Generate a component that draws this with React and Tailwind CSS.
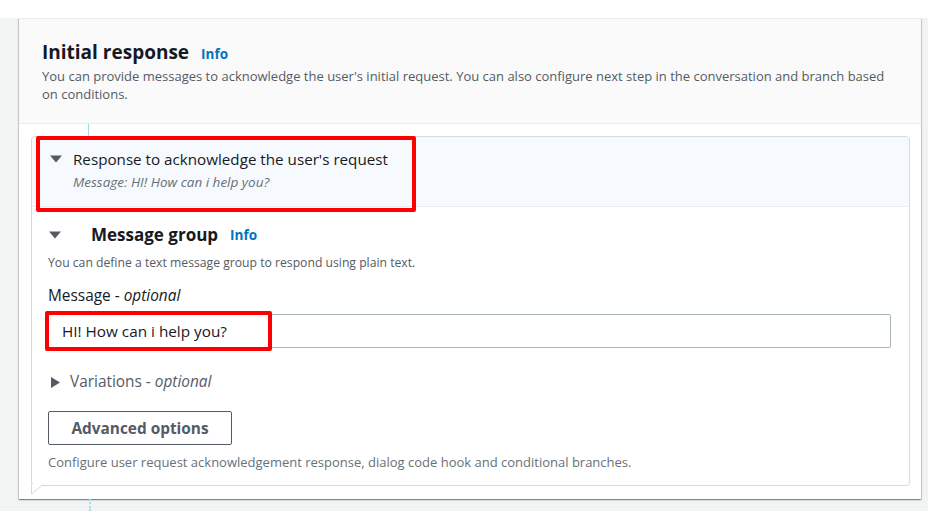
import React from "react";

function CaretDown({ className }) {
  return (
    <svg className={className} width="12" height="8" viewBox="0 0 12 8">
      <path d="M0 0.5 H12 L6 7.5 Z" fill="#545b64" />
    </svg>
  );
}

function CaretRight({ className }) {
  return (
    <svg className={className} width="9" height="11" viewBox="0 0 9 11">
      <path d="M0 0 V11 L9 5.5 Z" fill="#545b64" />
    </svg>
  );
}

export default function App() {
  return (
    <div
      className="w-[928px] h-[511px] bg-[#f2f3f3] overflow-hidden relative"
      style={{ fontFamily: '"Open Sans", "Noto Sans", sans-serif' }}
    >
      <div className="h-[18px] bg-white" />
      <div className="ml-[19px] w-[902px] bg-white border-t border-[#eaeded] shadow-[0_1px_1px_0_rgba(0,28,36,0.3),1px_1px_1px_0_rgba(0,28,36,0.15),-1px_1px_1px_0_rgba(0,28,36,0.15)] relative">
        {/* header */}
        <div className="bg-[#fafafa] border-b border-[#eaeded] pl-[23px] pr-[28px] pt-[22px] pb-[20px]">
          <div className="flex items-baseline gap-[12px]">
            <h2 className="text-[19px] leading-[22px] font-bold text-[#16191f]">Initial response</h2>
            <span className="text-[13.5px] font-bold text-[#0073bb]">Info</span>
          </div>
          <p className="mt-[3px] text-[13px] leading-[18px] text-[#545b64]">
            You can provide messages to acknowledge the user's initial request. You can also configure next step in the conversation and branch based on conditions.
          </p>
        </div>
        {/* content */}
        <div className="relative pl-[12px] pr-[11px] pt-[12px] pb-[13px]">
          <div className="absolute left-[69px] top-0 h-[12px] w-px bg-[#a6d9e2]" />
          <div className="relative border border-[#d5dbdb] rounded-[4px]">
            <div className="bg-[#f6fafe] border-b border-[#eaeded] rounded-t-[4px] pt-[12px] pb-[15px] pl-[18px]">
              <div className="flex items-center h-[20px]">
                <CaretDown className="mr-[11px]" />
                <span className="text-[15.2px] leading-[20px] text-[#16191f]">Response to acknowledge the user's request</span>
              </div>
              <div className="mt-[4px] pl-[23px] text-[13.5px] leading-[18px] italic text-[#687078]">
                Message: HI! How can i help you?
              </div>
            </div>
            <div className="pl-[16px] pr-[18px] pt-[17px] pb-[15px]">
              <div className="flex items-center h-[22px]">
                <CaretDown className="ml-[1px]" />
                <span className="ml-[30px] text-[17px] leading-[22px] font-bold text-[#16191f]">Message group</span>
                <span className="ml-[12px] text-[13.5px] font-bold text-[#0073bb]">Info</span>
              </div>
              <p className="mt-[8px] text-[12.2px] leading-[18px] text-[#545b64]">
                You can define a text message group to respond using plain text.
              </p>
              <div className="mt-[14px] text-[15.4px] leading-[20px] text-[#16191f]">
                Message - <i>optional</i>
              </div>
              <div className="mt-[8px] h-[34px] border border-[#aab7b8] rounded-[2px] flex items-center pl-[13px] text-[15.3px] text-[#16191f]">
                HI! How can i help you?
              </div>
              <div className="mt-[24px] flex items-center h-[20px]">
                <CaretRight className="ml-[3px]" />
                <span className="ml-[10px] text-[15.4px] leading-[20px] text-[#545b64]">
                  Variations - <i>optional</i>
                </span>
              </div>
              <button className="mt-[19px] h-[34px] w-[184px] border border-[#545b64] rounded-[2px] text-[15.4px] font-bold text-[#545b64] bg-white">
                Advanced options
              </button>
              <p className="mt-[9px] text-[13px] leading-[16px] text-[#687078]">
                Configure user request acknowledgement response, dialog code hook and conditional branches.
              </p>
            </div>
            {/* speech tail */}
            <svg className="absolute left-[-1px] bottom-[-10px]" width="14" height="11" viewBox="0 0 14 11">
              <path d="M0.5 0 V10 L12 0.5" fill="white" stroke="#d5dbdb" strokeWidth="1" />
              <rect x="1" y="0" width="10" height="1" fill="white" />
            </svg>
            {/* red highlight boxes */}
            <div className="absolute left-[4px] top-[-1px] w-[380px] h-[76px] border-[4px] border-[#ff0000] rounded-[2px] pointer-events-none" />
            <div className="absolute left-[13px] top-[174px] w-[227px] h-[40px] border-[4px] border-[#ff0000] rounded-[2px] pointer-events-none" />
          </div>
        </div>
      </div>
      <div className="absolute left-[89px] top-[499px] h-[12px] border-l-2 border-dotted border-[#a6d9e2]" />
    </div>
  );
}
